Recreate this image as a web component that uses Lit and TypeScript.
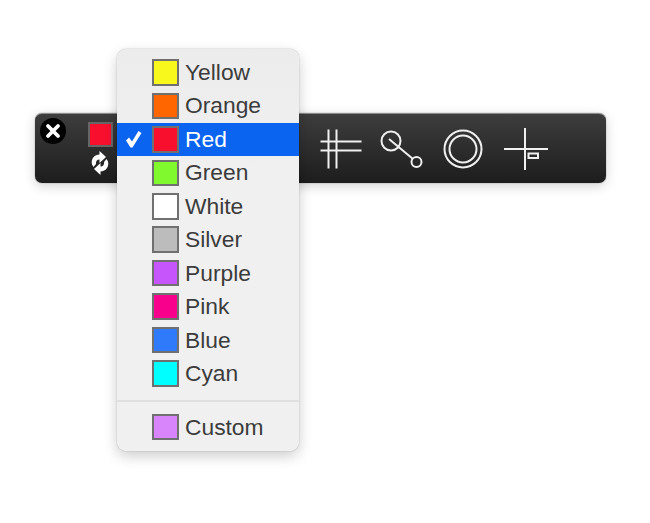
import { LitElement, html, css, svg } from 'lit';
import { customElement } from 'lit/decorators.js';

const colors = [
  { name: 'Yellow', color: '#f8f81c' },
  { name: 'Orange', color: '#ff6600' },
  { name: 'Red', color: '#f90f2e', selected: true },
  { name: 'Green', color: '#80f92e' },
  { name: 'White', color: '#ffffff' },
  { name: 'Silver', color: '#bcbcbc' },
  { name: 'Purple', color: '#c655fb' },
  { name: 'Pink', color: '#f8008c' },
  { name: 'Blue', color: '#2f79fb' },
  { name: 'Cyan', color: '#00ffff' },
];

const custom = { name: 'Custom', color: '#d884fb' };

// toolbar tools, drawn on a 48x44 box centred on the bar
const tools = [
  svg`<path d="M3.5 14.5H44.5M3.5 23.5H44.5M11.5 2.5V41.5M19.5 2.5V41.5"/>`,
  svg`<circle cx="13" cy="14" r="9.5"/><circle cx="38.5" cy="35" r="5"/><path d="M11 12L35 32"/>`,
  svg`<circle cx="23" cy="22" r="18.5"/><circle cx="23" cy="22" r="13.5"/>`,
  svg`<path d="M3 22H47M24 1V43"/><rect x="27.5" y="26.5" width="9.5" height="4.5"/>`,
];

@customElement('app-root')
export class AppRoot extends LitElement {
  static styles = css`
    :host {
      display: block;
      position: relative;
      width: 650px;
      height: 523px;
      background: #fff;
      font-family: 'Liberation Sans', Arial, sans-serif;
    }
    .stage {
      padding: 113px 0 0 35px;
    }

    .toolbar {
      display: flex;
      box-sizing: border-box;
      width: 571px;
      height: 70px;
      padding: 5px 0 0 5px;
      border-radius: 7px;
      border-top: 1px solid #8a8a8a;
      background: linear-gradient(#3d3d3d, #1d1d1d);
      box-shadow: 0 3px 12px rgba(0, 0, 0, 0.18), 0 0 1px rgba(0, 0, 0, 0.7);
    }
    .close {
      width: 26px;
      height: 26px;
      margin-top: -1px;
      flex: none;
    }
    .current {
      display: flex;
      flex-direction: column;
      align-items: center;
      gap: 2px;
      width: 25px;
      margin: 3px 0 0 22px;
      flex: none;
    }
    .current-swatch {
      box-sizing: border-box;
      width: 25px;
      height: 25px;
      border: 2px solid #666;
      background: #f90f2e;
    }
    .refresh {
      width: 22px;
      height: 26px;
      margin-left: -1px;
      margin-top: 1px;
    }
    .tools {
      display: flex;
      gap: 13.5px;
      margin: 7.5px 0 0 203.5px;
    }
    .tool {
      width: 48px;
      height: 44px;
      fill: none;
      stroke: #f0f0f0;
      stroke-width: 2;
    }

    .menu {
      position: absolute;
      left: 117px;
      top: 49px;
      box-sizing: border-box;
      width: 182px;
      height: 402px;
      padding-top: 6.8px;
      border-radius: 9px;
      background: linear-gradient(#ececec, #f0f0f0 30%);
      box-shadow: 0 0 1px rgba(0, 0, 0, 0.5), 0 5px 14px rgba(0, 0, 0, 0.2);
    }
    .row {
      display: flex;
      align-items: center;
      height: 33.44px;
      color: #3c3c3c;
      font-size: 22.8px;
    }
    .row.selected {
      background: #0a64f0;
      color: #fff;
    }
    .check {
      width: 35px;
      height: 18px;
      flex: none;
      fill: #fff;
    }
    .swatch {
      box-sizing: border-box;
      width: 26.5px;
      height: 26.5px;
      margin-right: 6.5px;
      border: 2px solid #707070;
      flex: none;
    }
    .divider {
      height: 2px;
      margin: 10.2px 0 8px;
      background: #e0e0e0;
    }
  `;

  renderRow(item: { name: string; color: string; selected?: boolean }) {
    return html`
      <div class="row ${item.selected ? 'selected' : ''}">
        <svg class="check" viewBox="0 0 35 18">
          ${item.selected
            ? svg`<path d="M9 10.5L12 7.5L15 11.5L21.5 1L24.5 3L15.5 17.5H13.5Z"/>`
            : ''}
        </svg>
        <span class="swatch" style="background:${item.color}"></span>
        <span>${item.name}</span>
      </div>
    `;
  }

  render() {
    return html`
      <div class="stage">
        <div class="toolbar">
          <svg class="close" viewBox="0 0 26 26">
            <circle cx="13" cy="13" r="13" fill="#000" />
            <path d="M8 8L18 18M18 8L8 18" stroke="#fff" stroke-width="3.8" stroke-linecap="round" />
          </svg>
          <div class="current">
            <div class="current-swatch"></div>
            <svg class="refresh" viewBox="0 0 22 26" fill="#fff">
              <path d="M3 14.5C1.5 8.5 6 4.5 10.5 4.5V1L17 7L10.5 13V9.5C8 9.5 6.5 11.5 7 14L4.5 17Z" />
              <path d="M19 11.5C20.5 17.5 16 21.5 11.5 21.5V25L5 19L11.5 13V16.5C14 16.5 15.5 14.5 15 12L17.5 9Z" />
            </svg>
          </div>
          <div class="tools">
            ${tools.map((t) => html`<svg class="tool" viewBox="0 0 48 44">${t}</svg>`)}
          </div>
        </div>
      </div>
      <div class="menu">
        ${colors.map((c) => this.renderRow(c))}
        <div class="divider"></div>
        ${this.renderRow(custom)}
      </div>
    `;
  }
}
